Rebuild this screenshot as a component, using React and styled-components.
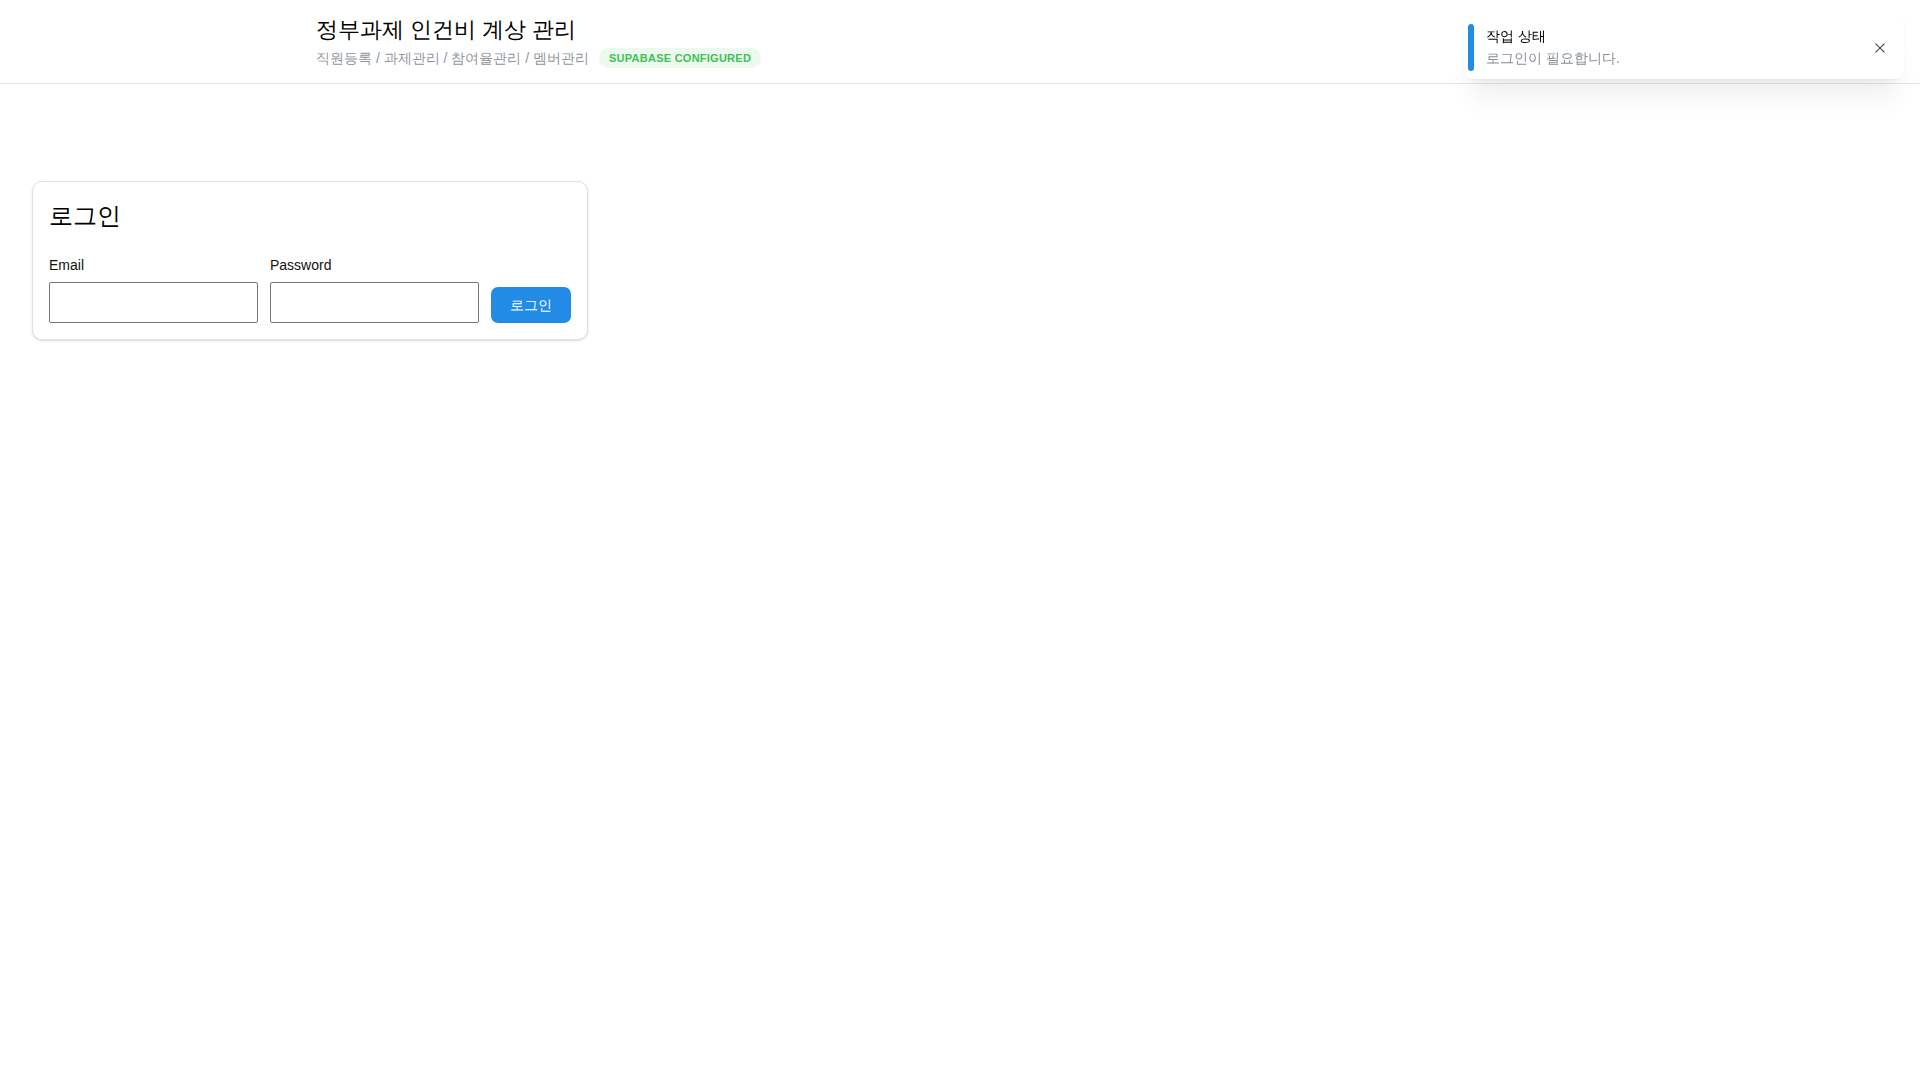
import React from 'react';
import styled, { createGlobalStyle } from 'styled-components';

const GlobalStyle = createGlobalStyle`
  html, body {
    margin: 0;
    padding: 0;
    background: #fff;
  }
  body {
    font-family: "Liberation Sans", Arial, sans-serif;
    color: #000;
  }
  * { box-sizing: border-box; }
`;

const Page = styled.div`
  min-height: 100vh;
  background: #fff;
`;

const Header = styled.header`
  height: 84px;
  padding: 15px 0 0 316px;
  border-bottom: 1px solid #e3e6ea;
`;

const AppTitle = styled.h1`
  margin: 0;
  font-size: 22px;
  line-height: 30px;
  font-weight: 400;
  color: #000;
`;

const SubRow = styled.div`
  display: flex;
  align-items: center;
  gap: 10px;
  margin-top: 3px;
  height: 20px;
`;

const Crumbs = styled.span`
  font-size: 14px;
  line-height: 20px;
  color: #8f959c;
`;

const Badge = styled.span`
  display: inline-flex;
  align-items: center;
  height: 20px;
  padding: 0 10px;
  border-radius: 1000px;
  font-size: 11px;
  font-weight: 700;
  letter-spacing: 0.25px;
  text-transform: uppercase;
  color: ${({ tone }) => (tone === 'green' ? '#40c057' : '#228be6')};
  background: ${({ tone }) => (tone === 'green' ? 'rgba(64, 192, 87, 0.1)' : 'rgba(34, 139, 230, 0.1)')};
`;

const Main = styled.main`
  padding: 97px 32px 32px;
`;

const Card = styled.section`
  width: 556px;
  padding: 16px;
  border: 1px solid #dee2e6;
  border-radius: 10px;
  background: #fff;
  box-shadow: 0 1px 3px rgba(0, 0, 0, 0.05), 0 1px 2px rgba(0, 0, 0, 0.1);
`;

const CardTitle = styled.h2`
  margin: 0 0 24px;
  font-size: 24px;
  line-height: 35px;
  font-weight: 400;
`;

const FormRow = styled.form`
  display: flex;
  align-items: flex-end;
  gap: 12px;
`;

const Field = styled.div`
  flex: 1;
  display: flex;
  flex-direction: column;
`;

const Label = styled.label`
  font-size: 14px;
  line-height: 16px;
  margin-bottom: 9px;
  color: #111;
`;

const Input = styled.input`
  height: 41px;
  width: 100%;
  padding: 0 8px;
  border: 1px solid #767676;
  border-radius: 2px;
  font: inherit;
  font-size: 14px;
  background: #fff;
  outline: none;
`;

const Button = styled.button`
  height: 36px;
  width: 80px;
  padding: 0;
  border: 0;
  border-radius: 7px;
  background: #228be6;
  color: #fff;
  font: inherit;
  font-size: 14px;
  line-height: 37px;
  cursor: pointer;
`;

const Toast = styled.div`
  position: fixed;
  top: 16px;
  right: 16px;
  width: 440px;
  display: flex;
  align-items: center;
  padding: 10px 10px 10px 22px;
  border-radius: 8px;
  background: #fff;
  box-shadow: 0 1px 3px rgba(0, 0, 0, 0.05), 0 28px 23px -7px rgba(0, 0, 0, 0.05),
    0 12px 12px -7px rgba(0, 0, 0, 0.04);

  &::before {
    content: '';
    position: absolute;
    top: 8px;
    bottom: 8px;
    left: 4px;
    width: 6px;
    border-radius: 8px;
    background: ${({ color }) => color};
  }
`;

const ToastBody = styled.div`
  flex: 1;
  margin-right: 10px;
`;

const ToastTitle = styled.div`
  font-size: 14px;
  line-height: 21.7px;
  font-weight: 500;
  color: #000;
`;

const ToastText = styled.div`
  font-size: 14px;
  line-height: 21.7px;
  color: #868e96;
`;

const CloseButton = styled.button`
  width: 28px;
  height: 28px;
  display: flex;
  align-items: center;
  justify-content: center;
  padding: 0;
  border: 0;
  border-radius: 4px;
  background: transparent;
  color: #495057;
  cursor: pointer;
`;

function CloseIcon() {
  return (
    <svg width="16" height="16" viewBox="0 0 15 15" fill="none">
      <path
        d="M11.7816 4.03157C12.0062 3.80702 12.0062 3.44295 11.7816 3.2184C11.5571 2.99385 11.193 2.99385 10.9685 3.2184L7.50005 6.68682L4.03164 3.2184C3.80708 2.99385 3.44301 2.99385 3.21846 3.2184C2.99391 3.44295 2.99391 3.80702 3.21846 4.03157L6.68688 7.49999L3.21846 10.9684C2.99391 11.193 2.99391 11.557 3.21846 11.7816C3.44301 12.0061 3.80708 12.0061 4.03164 11.7816L7.50005 8.31316L10.9685 11.7816C11.193 12.0061 11.5571 12.0061 11.7816 11.7816C12.0062 11.557 12.0062 11.193 11.7816 10.9684L8.31322 7.49999L11.7816 4.03157Z"
        fill="currentColor"
        fillRule="evenodd"
        clipRule="evenodd"
      />
    </svg>
  );
}

export default function App() {
  return (
    <Page>
      <GlobalStyle />
      <Header>
        <AppTitle>정부과제 인건비 계상 관리</AppTitle>
        <SubRow>
          <Crumbs>직원등록 / 과제관리 / 참여율관리 / 멤버관리</Crumbs>
          <Badge tone="green">Supabase configured</Badge>
        </SubRow>
      </Header>

      <Main>
        <Card>
          <CardTitle>로그인</CardTitle>
          <FormRow onSubmit={(e) => e.preventDefault()}>
            <Field>
              <Label htmlFor="email">Email</Label>
              <Input id="email" type="email" />
            </Field>
            <Field>
              <Label htmlFor="password">Password</Label>
              <Input id="password" type="password" />
            </Field>
            <Button type="submit">로그인</Button>
          </FormRow>
        </Card>
      </Main>

      <Toast color="#228be6">
        <ToastBody>
          <ToastTitle>작업 상태</ToastTitle>
          <ToastText>로그인이 필요합니다.</ToastText>
        </ToastBody>
        <CloseButton aria-label="닫기">
          <CloseIcon />
        </CloseButton>
      </Toast>
    </Page>
  );
}
